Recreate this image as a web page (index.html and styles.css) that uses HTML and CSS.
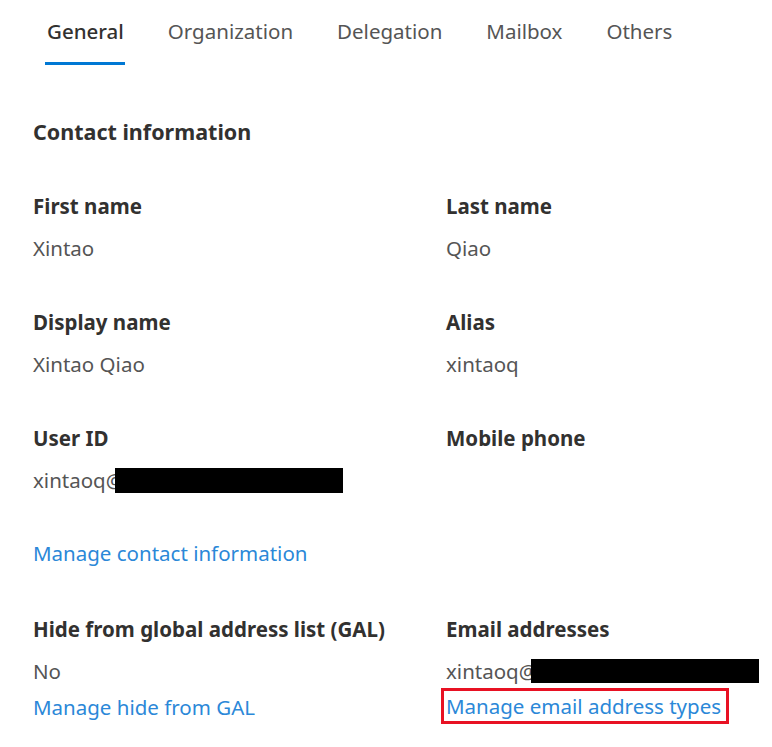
FILE: index.html
```html
<!DOCTYPE html>
<html lang="en">
<head>
    <meta charset="UTF-8">
    <meta name="viewport" content="width=device-width, initial-scale=1.0">
    <title>User details</title>
<link rel="stylesheet" href="styles.css">
</head>
<body>
    <!-- Tabs -->
    <div class="tabs">
        <div class="tab active">General</div>
        <div class="tab">Organization</div>
        <div class="tab">Delegation</div>
        <div class="tab">Mailbox</div>
        <div class="tab">Others</div>
    </div>

    <div class="panel">
        <h3 class="section-title">Contact information</h3>

        <div class="fields">
            <div class="field">
                <div class="label">First name</div>
                <div class="value">Xintao</div>
            </div>
            <div class="field">
                <div class="label">Last name</div>
                <div class="value">Qiao</div>
            </div>
            <div class="field">
                <div class="label">Display name</div>
                <div class="value">Xintao Qiao</div>
            </div>
            <div class="field">
                <div class="label">Alias</div>
                <div class="value">xintaoq</div>
            </div>
            <div class="field">
                <div class="label">User ID</div>
                <div class="value">xintaoq@<span class="redacted wide"></span></div>
            </div>
            <div class="field">
                <div class="label">Mobile phone</div>
                <div class="value"></div>
            </div>
        </div>

        <a class="link manage-contact" href="#">Manage contact information</a>

        <div class="fields bottom">
            <div class="field">
                <div class="label">Hide from global address list (GAL)</div>
                <div class="value">No</div>
                <a class="link" href="#">Manage hide from GAL</a>
            </div>
            <div class="field">
                <div class="label">Email addresses</div>
                <div class="value">xintaoq@<span class="redacted"></span></div>
                <a class="link highlighted" href="#">Manage email address types</a>
            </div>
        </div>
    </div>
</body>
</html>
```

FILE: styles.css
```css
body {
    font-family: "Noto Sans", "Open Sans", sans-serif;
    background-color: #fff;
    margin: 0;
    padding: 0;
    color: #323130;
    font-size: 20.5px;
}

.tabs {
    display: flex;
    gap: 44px;
    padding: 17px 0 0 47px;
}

.tab {
    position: relative;
    line-height: 28px;
    padding-bottom: 20px;
    color: #555;
}

.tab.active {
    color: #323130;
    font-weight: 500;
}

.tab.active::after {
    content: "";
    position: absolute;
    left: -2px;
    right: -1px;
    bottom: 0;
    height: 3px;
    background-color: #0078d4;
}

.panel {
    padding: 0 0 0 33px;
}

.section-title {
    margin: 53px 0 46px;
    font-size: 21.5px;
    line-height: 28px;
    font-weight: 700;
}

.fields {
    display: grid;
    grid-template-columns: 413px 1fr;
    row-gap: 46px;
}

.label {
    font-weight: 700;
    line-height: 28px;
}

.value {
    line-height: 28px;
    margin-top: 14px;
    min-height: 28px;
    color: #555;
    display: flex;
    align-items: center;
}

.redacted {
    display: inline-block;
    width: 228px;
    height: 24px;
    margin-left: -6px;
    background-color: #000;
}

.redacted.wide {
    height: 25px;
    margin-left: -9px;
}

.link {
    display: block;
    width: fit-content;
    color: #2b88d8;
    text-decoration: none;
    line-height: 28px;
}

.manage-contact {
    margin: 45px 0 48px;
}

.bottom .link {
    margin-top: 8px;
}

/* Red outline around the email link */
.highlighted {
    margin-left: -5px;
    padding: 0 5px 0 2px;
    line-height: 30px;
    border: 3px solid #e81123;
}

.bottom .link.highlighted {
    margin-top: 3px;
}
```
